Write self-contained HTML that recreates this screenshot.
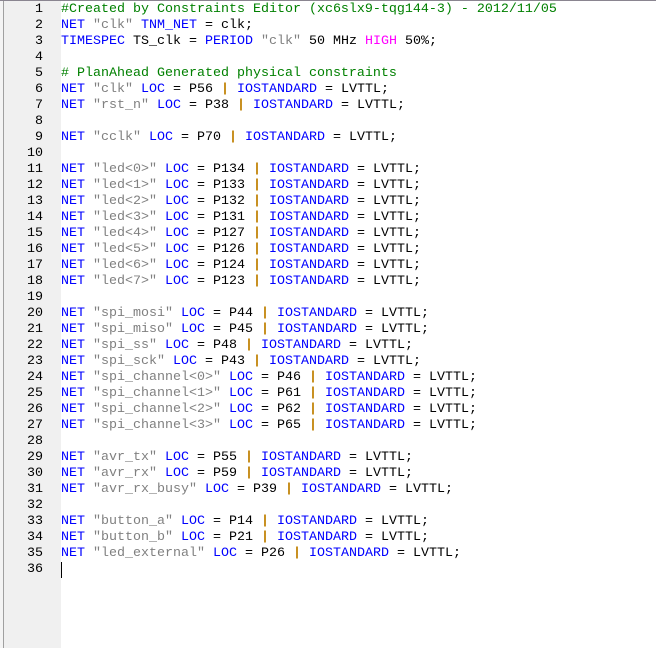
<!DOCTYPE html>
<html><head><style>
html,body{margin:0;padding:0;width:656px;height:648px;overflow:hidden;background:#fff}
.wrap{position:absolute;left:0;top:0;width:656px;height:648px;background:#fdfdfd}
.top{position:absolute;left:0;top:0;width:656px;height:1px;background:#8a8590}
.lb{position:absolute;left:0;top:1px;width:3px;height:647px;background:#f4f4f4}
.lb2{position:absolute;left:3px;top:1px;width:1px;height:647px;background:#a0a0a0}
.gut{position:absolute;left:4px;top:1px;width:57px;height:647px;background:#f0f0f0}
.code{position:absolute;left:61px;top:1px;width:595px;height:647px;background:#fff}
pre{margin:0;font-family:"Liberation Mono",monospace;font-size:13.33px;line-height:16px;}
.nums{position:absolute;left:4px;top:2px;width:39px;text-align:right;color:#000}
.txt{position:absolute;left:61px;top:2px;color:#000}
.k{color:#0000ff}.s{color:#808080}.c{color:#008000}.h{color:#ff00ff}.p{color:#c08000;font-weight:bold}
.cur{position:absolute;left:61px;top:562px;width:1px;height:16px;background:#000}
</style></head><body><div class="wrap">
<div class="top"></div><div class="lb"></div><div class="lb2"></div><div class="gut"></div><div class="code"></div>
<pre class="nums">1
2
3
4
5
6
7
8
9
10
11
12
13
14
15
16
17
18
19
20
21
22
23
24
25
26
27
28
29
30
31
32
33
34
35
36</pre>
<pre class="txt"><span class="c">#Created by Constraints Editor (xc6slx9-tqg144-3) - 2012/11/05</span>
<span class="k">NET</span> <span class="s">"clk"</span> <span class="k">TNM_NET</span> = clk;
<span class="k">TIMESPEC</span> TS_clk = <span class="k">PERIOD</span> <span class="s">"clk"</span> 50 MHz <span class="h">HIGH</span> 50%;

<span class="c"># PlanAhead Generated physical constraints</span>
<span class="k">NET</span> <span class="s">"clk"</span> <span class="k">LOC</span> = P56 <span class="p">|</span> <span class="k">IOSTANDARD</span> = LVTTL;
<span class="k">NET</span> <span class="s">"rst_n"</span> <span class="k">LOC</span> = P38 <span class="p">|</span> <span class="k">IOSTANDARD</span> = LVTTL;

<span class="k">NET</span> <span class="s">"cclk"</span> <span class="k">LOC</span> = P70 <span class="p">|</span> <span class="k">IOSTANDARD</span> = LVTTL;

<span class="k">NET</span> <span class="s">"led&lt;0&gt;"</span> <span class="k">LOC</span> = P134 <span class="p">|</span> <span class="k">IOSTANDARD</span> = LVTTL;
<span class="k">NET</span> <span class="s">"led&lt;1&gt;"</span> <span class="k">LOC</span> = P133 <span class="p">|</span> <span class="k">IOSTANDARD</span> = LVTTL;
<span class="k">NET</span> <span class="s">"led&lt;2&gt;"</span> <span class="k">LOC</span> = P132 <span class="p">|</span> <span class="k">IOSTANDARD</span> = LVTTL;
<span class="k">NET</span> <span class="s">"led&lt;3&gt;"</span> <span class="k">LOC</span> = P131 <span class="p">|</span> <span class="k">IOSTANDARD</span> = LVTTL;
<span class="k">NET</span> <span class="s">"led&lt;4&gt;"</span> <span class="k">LOC</span> = P127 <span class="p">|</span> <span class="k">IOSTANDARD</span> = LVTTL;
<span class="k">NET</span> <span class="s">"led&lt;5&gt;"</span> <span class="k">LOC</span> = P126 <span class="p">|</span> <span class="k">IOSTANDARD</span> = LVTTL;
<span class="k">NET</span> <span class="s">"led&lt;6&gt;"</span> <span class="k">LOC</span> = P124 <span class="p">|</span> <span class="k">IOSTANDARD</span> = LVTTL;
<span class="k">NET</span> <span class="s">"led&lt;7&gt;"</span> <span class="k">LOC</span> = P123 <span class="p">|</span> <span class="k">IOSTANDARD</span> = LVTTL;

<span class="k">NET</span> <span class="s">"spi_mosi"</span> <span class="k">LOC</span> = P44 <span class="p">|</span> <span class="k">IOSTANDARD</span> = LVTTL;
<span class="k">NET</span> <span class="s">"spi_miso"</span> <span class="k">LOC</span> = P45 <span class="p">|</span> <span class="k">IOSTANDARD</span> = LVTTL;
<span class="k">NET</span> <span class="s">"spi_ss"</span> <span class="k">LOC</span> = P48 <span class="p">|</span> <span class="k">IOSTANDARD</span> = LVTTL;
<span class="k">NET</span> <span class="s">"spi_sck"</span> <span class="k">LOC</span> = P43 <span class="p">|</span> <span class="k">IOSTANDARD</span> = LVTTL;
<span class="k">NET</span> <span class="s">"spi_channel&lt;0&gt;"</span> <span class="k">LOC</span> = P46 <span class="p">|</span> <span class="k">IOSTANDARD</span> = LVTTL;
<span class="k">NET</span> <span class="s">"spi_channel&lt;1&gt;"</span> <span class="k">LOC</span> = P61 <span class="p">|</span> <span class="k">IOSTANDARD</span> = LVTTL;
<span class="k">NET</span> <span class="s">"spi_channel&lt;2&gt;"</span> <span class="k">LOC</span> = P62 <span class="p">|</span> <span class="k">IOSTANDARD</span> = LVTTL;
<span class="k">NET</span> <span class="s">"spi_channel&lt;3&gt;"</span> <span class="k">LOC</span> = P65 <span class="p">|</span> <span class="k">IOSTANDARD</span> = LVTTL;

<span class="k">NET</span> <span class="s">"avr_tx"</span> <span class="k">LOC</span> = P55 <span class="p">|</span> <span class="k">IOSTANDARD</span> = LVTTL;
<span class="k">NET</span> <span class="s">"avr_rx"</span> <span class="k">LOC</span> = P59 <span class="p">|</span> <span class="k">IOSTANDARD</span> = LVTTL;
<span class="k">NET</span> <span class="s">"avr_rx_busy"</span> <span class="k">LOC</span> = P39 <span class="p">|</span> <span class="k">IOSTANDARD</span> = LVTTL;

<span class="k">NET</span> <span class="s">"button_a"</span> <span class="k">LOC</span> = P14 <span class="p">|</span> <span class="k">IOSTANDARD</span> = LVTTL;
<span class="k">NET</span> <span class="s">"button_b"</span> <span class="k">LOC</span> = P21 <span class="p">|</span> <span class="k">IOSTANDARD</span> = LVTTL;
<span class="k">NET</span> <span class="s">"led_external"</span> <span class="k">LOC</span> = P26 <span class="p">|</span> <span class="k">IOSTANDARD</span> = LVTTL;
</pre>
<div class="cur"></div>
</div></body></html>
